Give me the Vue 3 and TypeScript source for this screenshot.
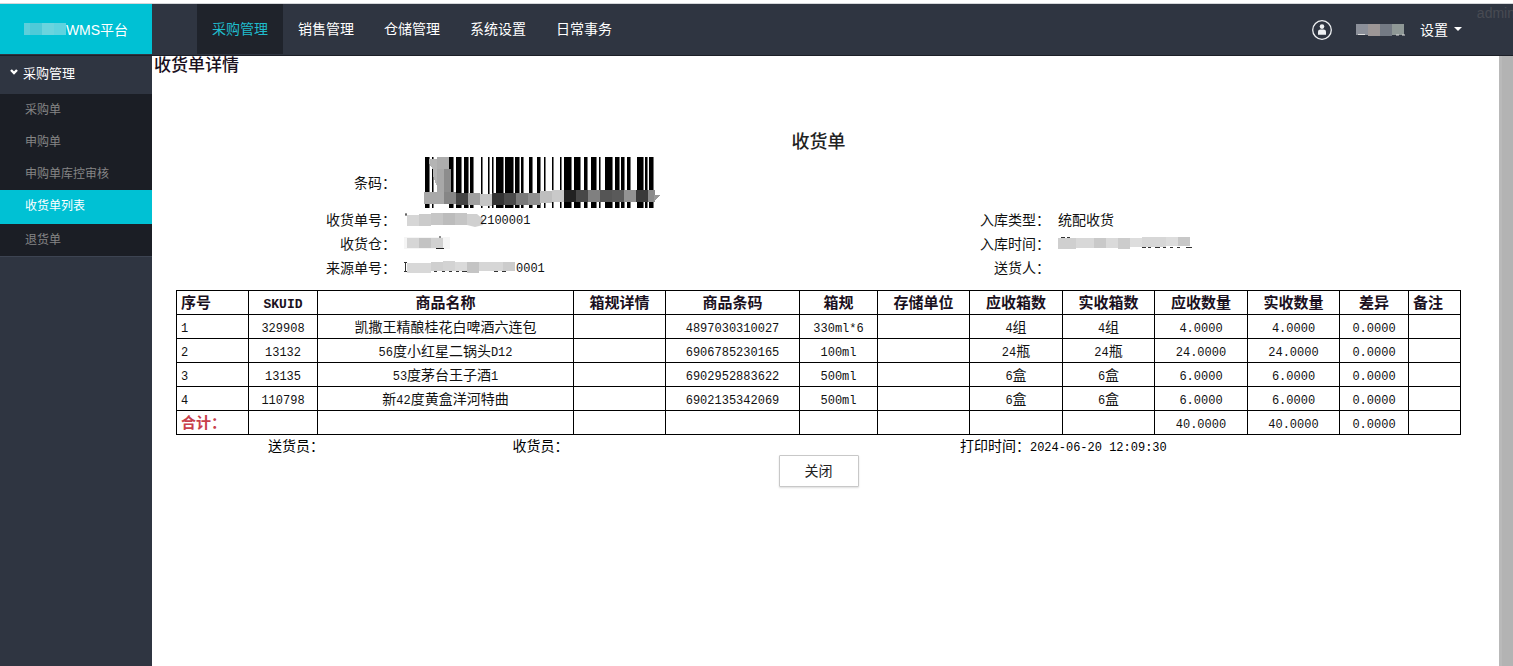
<script setup lang="ts">
interface Run { text: string; latin: boolean }
interface Column { title: string; width: number; align?: 'left' }
interface Box { x: number; y: number; w: number; h: number; fill: string }

const topMenus = ['采购管理', '销售管理', '仓储管理', '系统设置', '日常事务']
const sideMenus = ['采购单', '申购单', '申购单库控审核', '收货单列表', '退货单']
const activeSide = '收货单列表'

const columns: Column[] = [
  { title: '序号', width: 72, align: 'left' },
  { title: 'SKUID', width: 69 },
  { title: '商品名称', width: 256 },
  { title: '箱规详情', width: 92 },
  { title: '商品条码', width: 134 },
  { title: '箱规', width: 78 },
  { title: '存储单位', width: 92 },
  { title: '应收箱数', width: 93 },
  { title: '实收箱数', width: 92 },
  { title: '应收数量', width: 93 },
  { title: '实收数量', width: 92 },
  { title: '差异', width: 69 },
  { title: '备注', width: 52, align: 'left' },
]
const totalWidth = columns.reduce((sum, c) => sum + c.width, 0)

const rows: string[][] = [
  ['1', '329908', '凯撒王精酿桂花白啤酒六连包', '', '4897030310027', '330ml*6', '', '4组', '4组', '4.0000', '4.0000', '0.0000', ''],
  ['2', '13132', '56度小红星二锅头D12', '', '6906785230165', '100ml', '', '24瓶', '24瓶', '24.0000', '24.0000', '0.0000', ''],
  ['3', '13135', '53度茅台王子酒1', '', '6902952883622', '500ml', '', '6盒', '6盒', '6.0000', '6.0000', '0.0000', ''],
  ['4', '110798', '新42度黄盒洋河特曲', '', '6902135342069', '500ml', '', '6盒', '6盒', '6.0000', '6.0000', '0.0000', ''],
]
const totals = ['', '', '', '', '', '', '', '', '40.0000', '40.0000', '0.0000', '']

// Latin runs use a monospaced face beside the Chinese one.
function runs(text: string): Run[] {
  return (text.match(/[\x20-\x7e]+|[^\x20-\x7e]+/g) ?? []).map((t) => ({
    text: t,
    latin: /^[\x20-\x7e]/.test(t),
  }))
}

// Barcode bars as [left, width]; the last pixel of each is a soft edge.
const bars: [number, number][] = [
  [0, 5], [7, 2], [24, 5], [31, 6], [39, 5], [45, 4], [56, 2], [63, 2], [67, 2], [71, 8],
  [80, 9], [90, 5], [96, 3], [104, 4], [112, 4], [119, 2], [127, 2], [135, 2], [139, 8],
  [149, 7], [159, 4], [166, 6], [174, 2], [180, 8], [190, 5], [196, 4], [202, 4],
  [212, 7], [220, 3], [224, 5],
]
const masks: Box[] = [
  { x: 12, y: 0, w: 12, h: 12, fill: '#adadad' },
  { x: 12, y: 12, w: 7, h: 23, fill: '#a8a8a8' },
  { x: 19, y: 12, w: 7, h: 23, fill: '#8d8d8d' },
  { x: -1, y: 35, w: 20, h: 12, fill: '#a9a9a9' },
  { x: 19, y: 35, w: 12, h: 12, fill: '#868686' },
  { x: 31, y: 36, w: 12, h: 12, fill: '#444' },
  { x: 43, y: 36, w: 12, h: 12, fill: '#a0a0a0' },
  { x: 55, y: 37, w: 12, h: 12, fill: '#c6c6c6' },
  { x: 67, y: 36, w: 12, h: 12, fill: '#343434' },
  { x: 79, y: 36, w: 12, h: 12, fill: '#4a4a4a' },
  { x: 91, y: 36, w: 12, h: 12, fill: '#7a7a7a' },
  { x: 103, y: 36, w: 12, h: 12, fill: '#8f8f8f' },
  { x: 115, y: 34, w: 12, h: 12, fill: '#bebebe' },
  { x: 127, y: 33, w: 12, h: 12, fill: '#c9c9c9' },
  { x: 139, y: 33, w: 12, h: 12, fill: '#222' },
  { x: 151, y: 33, w: 12, h: 12, fill: '#484848' },
  { x: 163, y: 33, w: 12, h: 12, fill: '#808080' },
  { x: 175, y: 33, w: 12, h: 12, fill: '#555' },
  { x: 187, y: 33, w: 12, h: 12, fill: '#5a5a5a' },
  { x: 199, y: 33, w: 12, h: 12, fill: '#939393' },
  { x: 211, y: 33, w: 12, h: 12, fill: '#3a3a3a' },
  { x: 223, y: 33, w: 7, h: 12, fill: '#8b8b8b' },
]
</script>

<template>
  <div class="page">
    <header class="topbar">
      <a href="#" class="brand">
        <svg class="brand-mask" width="42" height="12" aria-hidden="true">
          <rect width="6" height="12" fill="#5ccfdb" /><rect x="6" width="12" height="12" fill="#4fcad8" />
          <rect x="18" width="12" height="12" fill="#6ad4de" /><rect x="30" width="12" height="12" fill="#5fd3df" />
        </svg>WMS平台
      </a>
      <nav class="menus">
        <a v-for="(m, i) in topMenus" :key="m" href="#" :class="{ on: i === 0 }">{{ m }}</a>
      </nav>
      <div class="user">
        <svg width="22" height="22" viewBox="0 0 22 22" aria-hidden="true">
          <circle cx="11" cy="11" r="9.3" fill="none" stroke="#eef0f2" stroke-width="1.3" />
          <circle cx="11" cy="7.6" r="2.3" fill="#eef0f2" />
          <path d="M7 15.8V13c0-1.6 1.2-2.4 2.4-2.4h3.2c1.2 0 2.4.8 2.4 2.4v2.8z" fill="#eef0f2" />
        </svg>
        <svg class="user-mask" width="50" height="12" aria-hidden="true">
          <rect width="12" height="11" fill="#8b8f99" /><rect x="12" width="12" height="12" fill="#9c9696" />
          <rect x="24" width="12" height="12" fill="#747a84" /><rect x="36" width="12" height="11" fill="#8f9896" />
          <path d="M2 10.500h7M40 11h3M46 11h3" stroke="#ddd" />
        </svg>
        <button type="button" class="settings">
          设置
          <svg width="8" height="4" aria-hidden="true"><path d="M0 0h8L4 4z" fill="#fff" /></svg>
        </button>
      </div>
      <span class="watermark">admin</span>
    </header>

    <div class="body">
      <aside class="side">
        <button type="button" class="group">
          <svg width="8" height="6" viewBox="0 0 8 6" aria-hidden="true">
            <path d="M1 1l3 3 3-3" fill="none" stroke="#fff" stroke-width="2.4" />
          </svg>
          采购管理
        </button>
        <nav class="side-list">
          <a v-for="s in sideMenus" :key="s" href="#" :class="{ on: s === activeSide }">{{ s }}</a>
        </nav>
      </aside>

      <main class="content">
        <h1>收货单详情</h1>
        <section class="sheet">
          <h2>收货单</h2>
          <div class="info">
            <span class="label">条码：</span>
            <svg class="barcode" width="238" height="54" viewBox="-2 -1 238 54" shape-rendering="crispEdges" role="img" aria-label="条码">
              <rect v-for="b in bars" :key="b[0]" :x="b[0]" y="0" :width="b[1] - 1" height="51" fill="#000" />
              <rect v-for="b in bars" :key="'e' + b[0]" :x="b[0] + b[1] - 1" y="0" width="1" height="51" fill="#777" />
              <path d="M4 2h8v26h-1L8 18V13L4 6z" fill="#b4b4b4" />
              <rect v-for="(m, i) in masks" :key="'m' + i" :x="m.x" :y="m.y" :width="m.w" :height="m.h" :fill="m.fill" />
              <path d="M229 38h6l-6 6z" fill="#999" />
            </svg>
            <span></span><span></span>

            <span class="label">收货单号：</span>
            <span class="value">
              <svg width="80" height="16" aria-hidden="true">
                <path d="M1 3h2M2 3v2" stroke="#333" /><rect x="3" y="4" width="12" height="11" fill="#d6d6d6" />
                <rect x="15" y="3" width="12" height="12" fill="#cbcbcb" /><rect x="27" y="2" width="12" height="12" fill="#c6c6c6" />
                <rect x="39" y="2" width="12" height="12" fill="#bcbcbc" /><rect x="51" y="2" width="12" height="12" fill="#c5c5c5" />
                <path d="M63 3h10l7 6-1 5-8 2-8-2z" fill="#d0d0d0" />
              </svg><span class="latin masked-tail">2100001</span>
            </span>
            <span class="label">入库类型：</span>
            <span class="value">统配收货</span>

            <span class="label">收货仓：</span>
            <span class="value">
              <svg width="50" height="16" aria-hidden="true">
                <rect x="0" y="2" width="46" height="12" fill="#f5f5f5" />
                <rect x="3" y="3" width="12" height="10" fill="#d6d6d6" /><rect x="15" y="3" width="12" height="10" fill="#c3c3c3" />
                <rect x="27" y="3" width="12" height="10" fill="#d1d1d1" /><path d="M32 13.500h8M36 1v2" stroke="#222" />
              </svg>
            </span>
            <span class="label">入库时间：</span>
            <span class="value">
              <svg width="140" height="16" aria-hidden="true">
                <path d="M3 2.500h4M9 2.500h3M84 12.500h4M90 12.500h3M97 12.500h5M105 12.500h3M112 12.500h3M119 12.500h3M128 12.500h6" stroke="#333" />
                <rect x="0" y="3" width="18" height="11" fill="#cfcfcf" /><rect x="18" y="3" width="18" height="10" fill="#d8d8d8" />
                <rect x="36" y="3" width="12" height="10" fill="#c9c9c9" /><rect x="48" y="3" width="12" height="10" fill="#dadada" />
                <rect x="60" y="3" width="12" height="11" fill="#ccc" /><rect x="72" y="3" width="12" height="9" fill="#ddd" />
                <rect x="84" y="2" width="24" height="10" fill="#d7d7d7" /><rect x="108" y="2" width="12" height="9" fill="#ddd" />
                <rect x="120" y="2" width="12" height="9" fill="#c8c8c8" />
              </svg>
            </span>

            <span class="label">来源单号：</span>
            <span class="value">
              <svg width="112" height="16" aria-hidden="true">
                <path d="M0 3.500h3M1.500 4v8M0 12.500h3M30 12.500h3M38 12.500h3M45 12.500h3M52 12.500h3M58 12.500h6M90 12.500h4M98 12.500h4" stroke="#333" />
                <rect x="3" y="4" width="24" height="10" fill="#d8d8d8" /><rect x="27" y="3" width="12" height="9" fill="#cfcfcf" />
                <rect x="39" y="2" width="12" height="10" fill="#d3d3d3" /><rect x="51" y="3" width="12" height="9" fill="#dadada" />
                <rect x="63" y="3" width="12" height="11" fill="#c4c4c4" /><rect x="75" y="3" width="24" height="9" fill="#d6d6d6" />
                <rect x="99" y="3" width="12" height="9" fill="#ccc" />
              </svg><span class="latin">0001</span>
            </span>
            <span class="label">送货人：</span>
            <span class="value"></span>
          </div>

          <table class="goods">
            <colgroup>
              <col v-for="c in columns" :key="c.title" :style="{ width: (c.width / totalWidth) * 100 + '%' }" />
            </colgroup>
            <thead>
              <tr>
                <th v-for="c in columns" :key="c.title" scope="col" :class="c.align">
                  <span v-for="r in runs(c.title)" :key="r.text" :class="{ latin: r.latin }">{{ r.text }}</span>
                </th>
              </tr>
            </thead>
            <tbody>
              <tr v-for="row in rows" :key="row[0]">
                <td v-for="(cell, i) in row" :key="i" :class="columns[i].align">
                  <span v-for="(r, k) in runs(cell)" :key="k" :class="{ latin: r.latin }">{{ r.text }}</span>
                </td>
              </tr>
            </tbody>
            <tfoot>
              <tr>
                <th scope="row" class="left total">合计：</th>
                <td v-for="(cell, i) in totals" :key="i"><span class="latin">{{ cell }}</span></td>
              </tr>
            </tfoot>
          </table>

          <div class="signs">
            <span>送货员：</span>
            <span>收货员：</span>
            <span>打印时间：<span class="latin">2024-06-20 12:09:30</span></span>
          </div>
          <div class="actions"><button type="button">关闭</button></div>
        </section>
      </main>
      <div class="gutter"></div>
    </div>
  </div>
</template>

<style>
html, body { margin: 0; background: #2f3541; }
</style>

<style scoped>
.page {
  display: flex;
  flex-direction: column;
  min-height: 100vh;
  box-sizing: border-box;
  border-top: 3px solid #fff;
  font-family: "Liberation Sans", "Noto Sans CJK SC", sans-serif;
  font-size: 14px;
  color: #000;
}
a { text-decoration: none; color: inherit; }
button { font: inherit; color: inherit; cursor: pointer; }

.topbar {
  position: relative;
  display: flex;
  height: 53px;
  box-sizing: border-box;
  border-top: 1px solid #d5d7da;
  border-bottom: 1px solid #1c1f27;
  background: #2f3541;
  color: #fff;
  overflow: hidden;
}
.brand {
  display: flex;
  align-items: center;
  justify-content: center;
  width: 152px;
  height: 50px;
  background: #00c1d4;
}
.menus { display: flex; height: 50px; margin-left: 45px; }
.menus a { padding: 0 15px; line-height: 50px; }
.menus a.on { background: #1f232b; color: #1fbccd; }
.user { display: flex; align-items: center; height: 52px; margin-left: auto; padding-right: 51px; }
.user-mask { margin-left: 23px; }
.settings {
  display: flex;
  align-items: center;
  gap: 6px;
  margin-left: 14px;
  padding: 0 0 3px;
  border: 0;
  background: none;
}
.watermark { position: absolute; top: 0; right: -2px; line-height: 18px; color: #484b53; }

.body { display: flex; flex: 1; }
.side { width: 152px; flex: none; background: #2f3541; }
.group {
  display: flex;
  align-items: center;
  gap: 5px;
  width: 100%;
  height: 38px;
  padding: 0 0 6px 10px;
  border: 0;
  background: none;
  color: #fff;
  font-size: 13px;
}
.side-list {
  display: flex;
  flex-direction: column;
  border-bottom: 1px solid #3d4452;
  background: #1b1e25;
  font-size: 12px;
  color: #858585;
}
.side-list a { padding-left: 25px; line-height: 32px; }
.side-list a.on { background: #00c1d4; color: #fff; padding-bottom: 2px; }

.content { flex: 1; min-width: 0; background: #fff; }
.gutter { width: 14px; flex: none; box-sizing: border-box; border-left: 3px solid #b9b9b9; background: #b3b3b3; }
h1 { margin: 0; padding-left: 2px; font-size: 17px; line-height: 20px; font-weight: 500; color: #1a1020; }
.sheet { padding: 0 38px 0 24px; }
h2 { margin: 52px 0 0; font-size: 18px; line-height: 28px; font-weight: 500; text-align: center; color: #222; }
.info {
  display: grid;
  grid-template-columns: 220fr 437fr 217fr 411fr;
  grid-template-rows: 51px repeat(3, 24px);
  align-items: center;
  color: #111;
}
.label { text-align: right; }
.barcode { align-self: start; margin-left: 27px; }
.value { display: flex; align-items: center; padding-left: 8px; }
.masked-tail { margin-left: -4px; }
.latin { font-family: "Liberation Mono", monospace; font-size: 12px; line-height: 1; }
.value .latin { padding-top: 3px; }

.goods {
  width: 100%;
  margin-top: 11px;
  border-collapse: collapse;
  table-layout: fixed;
  color: #111;
}
.goods th, .goods td {
  box-sizing: border-box;
  height: 24px;
  padding: 0 4px;
  border: 1px solid #000;
  line-height: 20px;
  text-align: center;
  white-space: nowrap;
}
.goods th { font-size: 15px; font-weight: 700; color: #1a1020; }
.goods th .latin { font-size: 13px; }
.goods .left { text-align: left; }
.goods .total { color: #c8404c; }

.signs {
  display: grid;
  grid-template-columns: 41fr 75fr 84fr;
  padding: 2px 0 0 92px;
  line-height: 18px;
}
.actions { display: flex; justify-content: center; }
.actions button {
  width: 80px;
  height: 32px;
  padding: 0 0 2px;
  border: 1px solid #c8c8c8;
  border-radius: 1px;
  background: #fff;
  box-shadow: 0 1px 2px #ddd;
  color: #222;
}
</style>
